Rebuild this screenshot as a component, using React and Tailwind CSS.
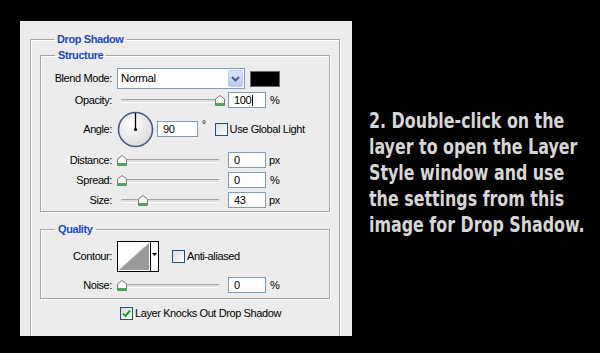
const ui = "font-['Liberation_Sans',Arial,sans-serif] text-[11px] tracking-[-0.4px] text-black";

function Thumb() {
  return (
    <svg width="10" height="11" viewBox="0 0 10 11">
      <path d="M0.5 4 L5 0.5 L9.5 4 V10.5 H0.5 Z" fill="#fbfbfb" stroke="#7c7c7c" />
      <rect x="1" y="8" width="8" height="2" fill="#3cb44c" />
    </svg>
  );
}

function Slider({ pos }) {
  return (
    <div className="relative w-[106px] h-[16px]">
      <div className="absolute left-[4px] w-[98px] top-[7px] h-[3px] rounded-l-full border-t border-[#a3a3a3] bg-[#dedede] shadow-[0_1px_0_#ffffff]" />
      <div className="absolute top-[3px]" style={{ left: pos - 5 }}>
        <Thumb />
      </div>
    </div>
  );
}

function Field({ value, caret, className }) {
  return (
    <div className={`h-[16px] border border-[#7f9db9] bg-white pl-[5px] leading-[14px] flex items-center ${className}`}>
      <span>{value}</span>
      {caret && <span className="ml-[1px] w-px h-[11px] bg-black" />}
    </div>
  );
}

function Check({ checked }) {
  return (
    <div className="w-[13px] h-[13px] border border-[#1c5180] bg-gradient-to-br from-[#dcdcd7] to-[#ffffff] flex items-center justify-center">
      {checked && (
        <svg width="9" height="9" viewBox="0 0 9 9">
          <path d="M1 4.5 L3.5 7 L8 1.5" fill="none" stroke="#21a121" strokeWidth="2" />
        </svg>
      )}
    </div>
  );
}

function Label({ children }) {
  return <div className="w-[71px] text-right shrink-0 mr-[5px]">{children}</div>;
}

function Legend({ children }) {
  return (
    <legend className="ml-[14px] px-[3px] font-bold text-[#1b47bd] leading-[14px]">{children}</legend>
  );
}

const groupBorder = "border border-[#a6a69e] shadow-[1px_1px_0_#ffffff,inset_1px_1px_0_#ffffff]";

export default function App() {
  return (
    <div className="w-[600px] h-[353px] bg-black flex overflow-hidden">
      <div className={`shrink-0 ml-[20px] mt-[21px] w-[332px] h-[315px] bg-[#ececec] overflow-hidden pl-[10px] ${ui}`}>
        <fieldset className={`mt-[11px] w-[310px] h-[320px] ${groupBorder} px-[9px]`}>
          <Legend>Drop Shadow</Legend>

          <fieldset className={`mt-[2px] w-[290px] ${groupBorder} pt-[6px] pb-[3px]`}>
            <Legend>Structure</Legend>

            <div className="flex items-center h-[21px]">
              <Label>Blend Mode:</Label>
              <div className="w-[128px] h-[21px] border border-[#7f9db9] bg-white flex items-center">
                <span className="flex-1 pl-[3px] text-[11.5px]">Normal</span>
                <div className="w-[15px] h-[17px] mr-px rounded-[2px] bg-gradient-to-b from-[#dbe6fd] to-[#b7cbf5] border border-[#b9cdf6] flex items-center justify-center">
                  <svg width="9" height="6" viewBox="0 0 9 6">
                    <path d="M1 1 L4.5 4.5 L8 1" fill="none" stroke="#4d6185" strokeWidth="2" />
                  </svg>
                </div>
              </div>
              <div className="ml-[5px] w-[30px] h-[16px] bg-black border border-[#6a6a6a]" />
            </div>

            <div className="flex items-center h-[16px] mt-[3px]">
              <Label>Opacity:</Label>
              <Slider pos={102.5} />
              <Field value="100" caret className="w-[38px] ml-[5px]" />
              <span className="ml-[4px]">%</span>
            </div>

            <div className="flex items-center h-[36px] mt-[3px]">
              <Label>Angle:</Label>
              <svg width="37" height="37" viewBox="0 0 37 37">
                <defs>
                  <radialGradient id="dial" cx="40%" cy="35%" r="70%">
                    <stop offset="0" stopColor="#ffffff" />
                    <stop offset="1" stopColor="#d8d8d8" />
                  </radialGradient>
                </defs>
                <circle cx="18.5" cy="18.5" r="17" fill="url(#dial)" stroke="#4b5a84" strokeWidth="1.6" />
                <line x1="18.5" y1="18.5" x2="18.5" y2="2" stroke="#000" strokeWidth="1.3" />
                <circle cx="18.5" cy="18.5" r="1.6" fill="#000" />
              </svg>
              <Field value="90" className="w-[41px] ml-[3px]" />
              <span className="ml-[4px] self-start mt-[9px] text-[10px] leading-none">°</span>
              <div className="ml-[9px]">
                <Check />
              </div>
              <span className="ml-[2px]">Use Global Light</span>
            </div>

            <div className="flex items-center h-[16px] mt-[5px]">
              <Label>Distance:</Label>
              <Slider pos={5} />
              <Field value="0" className="w-[38px] ml-[5px]" />
              <span className="ml-[3px]">px</span>
            </div>

            <div className="flex items-center h-[16px] mt-[4px]">
              <Label>Spread:</Label>
              <Slider pos={5} />
              <Field value="0" className="w-[38px] ml-[5px]" />
              <span className="ml-[4px]">%</span>
            </div>

            <div className="flex items-center h-[16px] mt-[4px]">
              <Label>Size:</Label>
              <Slider pos={26} />
              <Field value="43" className="w-[38px] ml-[5px]" />
              <span className="ml-[3px]">px</span>
            </div>
          </fieldset>

          <fieldset className={`mt-[10px] w-[290px] ${groupBorder} pt-[5px] pb-[5px]`}>
            <Legend>Quality</Legend>

            <div className="flex items-center h-[31px]">
              <Label>Contour:</Label>
              <div className="flex w-[42px] h-[31px] border border-black bg-white">
                <svg width="32" height="29" viewBox="0 0 32 29">
                  <polygon points="1,28 31,1 31,28" fill="#9a9a9a" />
                  <line x1="1" y1="28" x2="31" y2="1" stroke="#c8c8c8" strokeWidth="1" />
                </svg>
                <div className="flex-1 border-l border-black flex items-center justify-center pb-[4px]">
                  <svg width="5" height="3" viewBox="0 0 5 3">
                    <polygon points="0,0 5,0 2.5,3" fill="#000" />
                  </svg>
                </div>
              </div>
              <div className="ml-[13px]">
                <Check />
              </div>
              <span className="ml-[2px]">Anti-aliased</span>
            </div>

            <div className="flex items-center h-[16px] mt-[5px]">
              <Label>Noise:</Label>
              <Slider pos={5} />
              <Field value="0" className="w-[38px] ml-[5px]" />
              <span className="ml-[4px]">%</span>
            </div>
          </fieldset>

          <div className="flex items-center mt-[6px] ml-[80px]">
            <Check checked />
            <span className="ml-[2px]">Layer Knocks Out Drop Shadow</span>
          </div>
        </fieldset>
      </div>

      <div className="shrink-0 ml-[17px] mt-[108px] origin-left scale-x-[0.84] whitespace-nowrap font-['DejaVu_Sans_Condensed','Liberation_Sans_Narrow','Arial_Narrow',sans-serif] [font-stretch:condensed] font-bold text-[21px] leading-[26px] text-[#d6d6d6]">
        <p>2. Double-click on the</p>
        <p>layer to open the Layer</p>
        <p>Style window and use</p>
        <p>the settings from this</p>
        <p>image for Drop Shadow.</p>
      </div>
    </div>
  );
}
